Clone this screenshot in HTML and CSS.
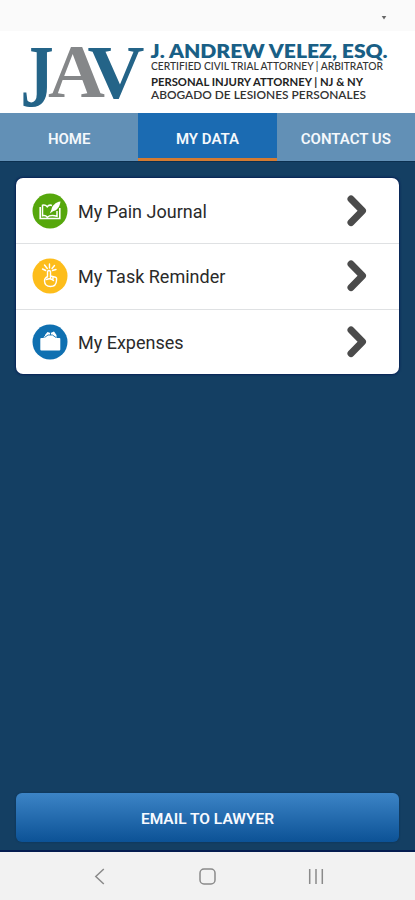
FILE: index.html
```html
<!DOCTYPE html>
<html lang="en">
<head>
<meta charset="utf-8">
<title>My Data</title>
<link rel="stylesheet" href="styles.css">
</head>
<body>
<div class="status"><svg width="6" height="5" viewBox="0 0 6 5"><path d="M.7 1h4.600L3 4.600z"/></svg></div>
<header class="brand">
  <svg width="415" height="82" viewBox="0 31 415 82">
    <g class="mono">
      <text class="blue" transform="translate(20.500 106) scale(.8 1.080)">J</text>
      <text class="gray" transform="translate(48 97) scale(.95 .93)">A</text>
      <text class="blue" transform="translate(87.500 97.500) scale(.95 .930)">V</text>
    </g>
    <text class="name" x="150.500" y="57.500" textLength="237" lengthAdjust="spacingAndGlyphs">J. ANDREW VELEZ, ESQ.</text>
    <text class="line" x="151" y="70" textLength="232" lengthAdjust="spacingAndGlyphs">CERTIFIED CIVIL TRIAL ATTORNEY | ARBITRATOR</text>
    <text class="line strong" x="151" y="86" textLength="212" lengthAdjust="spacingAndGlyphs">PERSONAL INJURY ATTORNEY | NJ &amp; NY</text>
    <text class="line medium" x="151" y="99" textLength="215" lengthAdjust="spacingAndGlyphs">ABOGADO DE LESIONES PERSONALES</text>
  </svg>
</header>
<nav class="tabs">
  <a class="tab">HOME</a>
  <a class="tab active">MY DATA</a>
  <a class="tab">CONTACT US</a>
</nav>
<main class="content">
  <ul class="card">
    <li class="row">
      <svg class="badge" viewBox="0 0 36 36"><circle cx="18" cy="18" r="17.500" fill="#56a70c"/>
        <path d="M20 12.500c-2-.8-4 .2-4.800 1.300-1.200-1.400-3-2-4.700-1.500v10.500c1.800-.5 3.600 0 4.800 1.500 2.200-2 6.700-1.800 9.700-1V18" fill="none" stroke="#fff" stroke-width="1.500"/>
        <path d="M8.200 14v11.500h19.600V15" fill="none" stroke="#fff" stroke-width="1.600"/>
        <path d="M28.500 8.500c-5 .5-8.500 4.500-9 8l-1.700 4 3.200-2.300c4-.5 7-4.700 7.500-9.700z" fill="#fff"/></svg>
      <span class="label">My Pain Journal</span>
      <svg class="chevron" viewBox="0 0 24 36"><path d="M5 6 16.500 17.700 5 29.500"/></svg>
    </li>
    <li class="row">
      <svg class="badge" viewBox="0 0 36 36"><circle cx="18" cy="18" r="17.500" fill="#fdbd1b"/>
        <g fill="none" stroke="#fff" stroke-width="1.400" stroke-linecap="round" stroke-linejoin="round"><path d="m10.500 11 3.200 1.500M12.500 7l2.800 3.500M17.500 6v4M22.500 7.500 20 10.500M24 11.500l-3.500 1"/>
        <path d="M15.500 19v-5.500q1.500-2 3 0V18l5 1.200q1.500.5 1 3.300-.3 6-6 6t-6-5.500q0-3 3-4.500z"/><path d="M14.500 21.500q4-2 7 1M18.500 18v3M21 19v2"/></g></svg>
      <span class="label">My Task Reminder</span>
      <svg class="chevron" viewBox="0 0 24 36"><path d="M5 6 16.500 17.700 5 29.500"/></svg>
    </li>
    <li class="row">
      <svg class="badge" viewBox="0 0 36 36"><circle cx="18" cy="18" r="17.500" fill="#0f70b1"/>
        <path d="M8.500 14h3l1-2h11l1 2h3q.8 0 .8.800v10.700q0 1-1 1h-18q-1 0-1-1V14.800q0-.8 1.200-.8z" fill="#fff"/>
        <path d="m13 11 2.500-3 3 1 3.500-1.500 2.500 3.500v2.500H13z" fill="#fff"/><path d="M12.500 13.500 16 11h4.500l3.500 2.500M18.500 9v2" fill="none" stroke="#0f70b1" stroke-width=".9"/></svg>
      <span class="label">My Expenses</span>
      <svg class="chevron" viewBox="0 0 24 36"><path d="M5 6 16.500 17.700 5 29.500"/></svg>
    </li>
  </ul>
  <button class="email">EMAIL TO LAWYER</button>
</main>
<footer class="system">
  <svg width="415" height="48" viewBox="0 852 415 48"><g fill="none" stroke="#8a8a8a" stroke-width="1.500"><path d="m103.800 869-8 7.500 8 7.500"/><rect x="200" y="869" width="15" height="15" rx="4"/><path d="M309.700 869v15M316 869v15M322.300 869v15"/></g></svg>
</footer>
</body>
</html>
```
FILE: styles.css
```css
* { box-sizing: border-box; }
body {
  margin: 0;
  width: 415px;
  height: 900px;
  display: flex;
  flex-direction: column;
  overflow: hidden;
  background: #143f63;
  font-family: Roboto, "Liberation Sans", sans-serif;
}
svg { display: block; flex: none; overflow: visible; }
.status {
  height: 31px;
  padding: 15px 28px 0 0;
  display: flex;
  justify-content: flex-end;
  background: #fafafa;
}
.status path { fill: #666; }
.brand { height: 82px; background: #fff; }
.mono text { font: bold 83px "Liberation Serif", serif; }
.blue { fill: #246488; }
.gray { fill: #858789; }
.name { font: 800 18px Lato, sans-serif; fill: #195f86; }
.line { font: 500 11px Lato, sans-serif; fill: #333; }
.strong { font-weight: 700; fill: #222; }
.medium { font-weight: 600; }
.tabs {
  height: 49px;
  display: grid;
  grid-template-columns: repeat(3, 1fr);
  background: #6290b6;
  border-bottom: 1px solid #0c3050;
}
.tab {
  display: flex;
  align-items: center;
  justify-content: center;
  padding-top: 3px;
  color: #f4f8fc;
  font-size: 15px;
  font-weight: 600;
}
.active { background: #1b6bb2; border-bottom: 3px solid #d47b32; padding-top: 6px; }
.content {
  flex: 1;
  padding: 16px 16px 8px;
  display: flex;
  flex-direction: column;
  justify-content: space-between;
  border-bottom: 2px solid #041c50;
}
.card {
  margin: 0;
  padding: 0;
  height: 196px;
  list-style: none;
  display: grid;
  grid-template-rows: repeat(3, 1fr);
  background: #fff;
  border-radius: 7px;
  box-shadow: 0 0 2px 1px #082356;
}
.row { display: flex; align-items: center; padding: 0 29px 0 16px; }
.row + .row { border-top: 1px solid #dfe1e3; }
.badge { width: 36px; height: 36px; }
.label { flex: 1; margin-left: 10px; padding-top: 1px; font-size: 18px; color: #2a2a2a; }
.chevron { width: 24px; height: 36px; }
.chevron path { fill: none; stroke: #4b4b4b; stroke-width: 7; stroke-linecap: round; stroke-linejoin: round; }
.email {
  height: 49px;
  padding: 3px 0 0;
  border: 0;
  border-radius: 6px;
  background: linear-gradient(#3c84c6, #0c5296);
  box-shadow: 0 0 2px #092f55;
  color: #f7faff;
  font: 600 15.500px Roboto, sans-serif;
}
.system { height: 48px; background: #f2f2f2; }
```
